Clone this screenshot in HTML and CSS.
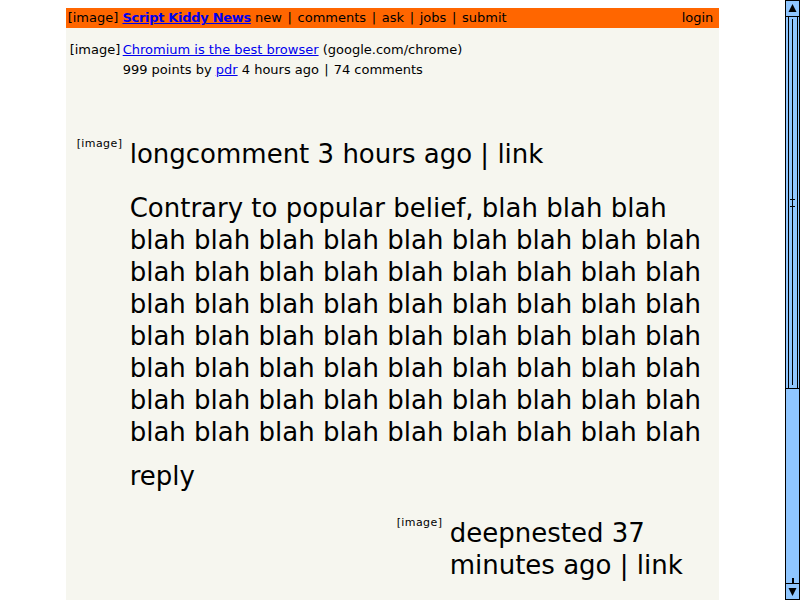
FILE: index.html
```html
<!DOCTYPE html>
<html>
<head>
<meta charset="utf-8">
<title>Script Kiddy News</title>
<link rel="stylesheet" href="styles.css">
</head>
<body>
<div class="viewport">
  <div class="page">
    <div class="hnbar">
      <div class="nav">[image] <a class="brand" href="#">Script Kiddy News</a> new <span class="sep">|</span> comments <span class="sep">|</span> ask <span class="sep">|</span> jobs <span class="sep">|</span> submit</div>
      <div class="login">login</div>
    </div>
    <div class="content">
      <div class="story">
        <div class="story-img">[image]</div>
        <div class="story-main">
          <div class="story-title"><a href="#">Chromium is the best browser</a> (google.com/chrome)</div>
          <div class="subtext">999 points by <a href="#">pdr</a> 4 hours ago <span class="sep">|</span> 74 comments</div>
        </div>
      </div>
      <div class="comment">
        <div class="vote"><span class="alt">[image]</span></div>
        <div class="cbody">
          <div class="comhead">longcomment 3 hours ago | link</div>
          <div class="ctext">Contrary to popular belief, blah blah blah blah blah blah blah blah blah blah blah blah blah blah blah blah blah blah blah blah blah blah blah blah blah blah blah blah blah blah blah blah blah blah blah blah blah blah blah blah blah blah blah blah blah blah blah blah blah blah blah blah blah blah blah blah blah blah blah blah blah blah blah blah blah blah</div>
          <div class="reply">reply</div>
        </div>
      </div>
      <div class="comment nested">
        <div class="indent"></div>
        <div class="vote"><span class="alt">[image]</span></div>
        <div class="cbody">
          <div class="comhead">deepnested 37 minutes ago | link</div>
        </div>
      </div>
    </div>
  </div>
</div>
<div class="scrollbar">
  <div class="sb-btn sb-up">
    <svg width="13" height="15" viewBox="0 0 13 15"><polygon points="6.5,3 10.5,11 2.5,11" fill="#000"/></svg>
  </div>
  <div class="sb-thumb">
    <svg width="13" height="371" viewBox="0 0 13 371">
      <rect x="2" y="0" width="1" height="371" fill="#000"/>
      <rect x="11" y="0" width="1" height="371" fill="#000"/>
      <rect x="6" y="2" width="1" height="366" fill="#000"/>
      <rect x="4" y="182" width="5" height="1" fill="#000"/>
      <rect x="4" y="189" width="5" height="1" fill="#000"/>
    </svg>
  </div>
  <div class="sb-track"><div class="sb-tick"></div></div>
  <div class="sb-btn sb-down">
    <svg width="13" height="15" viewBox="0 0 13 15"><polygon points="2.5,4 10.5,4 6.5,12" fill="#000"/></svg>
  </div>
</div>
</body>
</html>
```
FILE: styles.css
```css
html, body {
  margin: 0;
  padding: 0;
  height: 600px;
  overflow: hidden;
  background: #fff;
}
body {
  display: flex;
  font-family: "DejaVu Sans", Verdana, sans-serif;
  color: #000;
}
.viewport {
  flex: 1;
  padding: 8px 8px 0;
  display: flex;
  flex-direction: column;
  min-width: 0;
}
.page {
  width: 85%;
  margin: 0 auto;
  flex: 1;
  display: flex;
  flex-direction: column;
}
.hnbar {
  background: #ff6600;
  height: 20px;
  display: flex;
  justify-content: space-between;
  align-items: center;
  padding: 0 6px 0 2px;
  font-size: 13px;
  line-height: 20px;
  white-space: nowrap;
}
.sep {
  margin: 0 1.5px;
}
.brand {
  color: #0000ee;
  font-weight: bold;
  letter-spacing: -0.3px;
}
a {
  color: #0000ee;
}
.content {
  background: #f6f6ef;
  flex: 1;
}
.story {
  display: flex;
  padding: 12px 0 0 4px;
  font-size: 13px;
  line-height: 20px;
}
.story-img {
  width: 53px;
  flex: none;
}
.subtext .sep {
  margin: 0 1px;
}
.comment {
  display: flex;
  margin-top: 58px;
}
.comment.nested {
  margin-top: 25px;
}
.indent {
  width: 320px;
  flex: none;
}
.vote {
  width: 64px;
  flex: none;
  padding-left: 11px;
  box-sizing: border-box;
}
.alt {
  display: block;
  font-size: 11px;
  line-height: 12px;
  letter-spacing: 0.4px;
  margin-top: 0;
}
.cbody {
  flex: 1;
  min-width: 0;
  font-size: 26px;
  line-height: 32px;
}
.ctext {
  margin-top: 22px;
}
.reply {
  margin-top: 12px;
}
.scrollbar {
  width: 15px;
  flex: none;
  height: 600px;
  display: flex;
  flex-direction: column;
  background: #8fc6ff;
}
.sb-btn {
  height: 15px;
  border: 1px solid #000;
  display: flex;
}
.sb-thumb {
  height: 371px;
  border: 1px solid #000;
  border-top: 0;
  display: flex;
}
.sb-track {
  flex: 1;
  border-left: 1px solid #000;
  border-right: 1px solid #000;
  display: flex;
  flex-direction: column;
  justify-content: flex-end;
  align-items: center;
}
.sb-tick {
  width: 2px;
  height: 5px;
  background: #000;
}
.sb-down {
  border-top: 1px solid #000;
}
```
